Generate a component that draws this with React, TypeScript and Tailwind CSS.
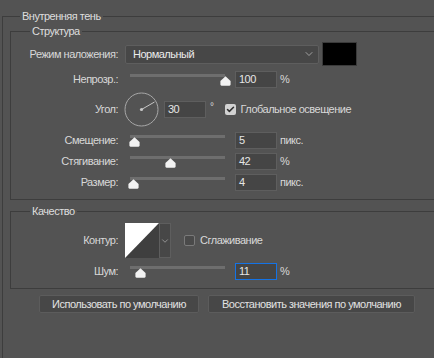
import type { FC, ReactNode } from 'react';
import { ChevronDown, Check } from 'lucide-react';

// ── Small pieces ────────────────────────────────────────────────────────────
const Thumb: FC = () => (
    <svg width="11" height="10" viewBox="0 0 11 10">
        <path d="M5.5 0.3 L10.6 5 V8.6 Q10.6 9.7 9.5 9.7 H1.5 Q0.4 9.7 0.4 8.6 V5 Z" fill="#f2f2f2" />
    </svg>
);

// pos = thumb centre in px from the track start
const Slider: FC<{ pos: number }> = ({ pos }) => (
    <div className="relative w-[95px] h-[17px] ml-[5px] shrink-0">
        <div className="absolute left-0 right-0 top-[3px] h-[3px] bg-[#6e6e6e]" />
        <div className="absolute top-[5px]" style={{ left: `${pos - 5.5}px` }}>
            <Thumb />
        </div>
    </div>
);

const Field: FC<{ value: string; focus?: boolean; className?: string }> = ({ value, focus, className }) => (
    <div
        className={
            'h-[17px] w-[42px] shrink-0 flex items-center pl-[3px] bg-[#454545] border text-[#e6e6e6] ' +
            (focus ? 'border-[#1473e6] ' : 'border-[#5e5e5e] ') +
            (className ?? '')
        }
    >
        {value}
    </div>
);

const Label: FC<{ children: ReactNode }> = ({ children }) => (
    <div className="w-[107px] shrink-0 text-right">{children}</div>
);

const Legend: FC<{ children: ReactNode; ml: string }> = ({ children, ml }) => (
    <div className={'-mt-[9px] w-fit px-[2px] bg-[#535353] leading-[16px] text-[#dedede] ' + ml}>{children}</div>
);

const SliderRow: FC<{ label: string; pos: number; value: string; unit: string; className?: string; focus?: boolean }> = ({
    label, pos, value, unit, className, focus,
}) => (
    <div className={'flex items-center h-[17px] ' + (className ?? '')}>
        <Label>{label}</Label>
        <div className="ml-[7px]" />
        <Slider pos={pos} />
        <Field value={value} focus={focus} className="ml-[10px]" />
        <span className="ml-[3px]">{unit}</span>
    </div>
);

export default function App() {
    return (
        <div className="w-[434px] h-[358px] overflow-hidden bg-[#535353] text-[#d8d8d8] text-[11px] tracking-[-0.5px] font-['Liberation_Sans',Tahoma,sans-serif] leading-none">
            {/* ── Outer group ── */}
            <div className="ml-[2px] mt-[16px] h-[400px] border-t border-l border-[#3d3d3d]">
                <Legend ml="ml-[17px]">Внутренняя тень</Legend>

                {/* ── Структура ── */}
                <div className="ml-[7px] mt-[7px] border-t border-l border-b border-[#3d3d3d] pb-[8px]">
                    <Legend ml="ml-[19px]">Структура</Legend>

                    <div className="flex items-center h-[24px] mt-[3px]">
                        <Label>Режим наложения:</Label>
                        <div className="ml-[7px] w-[194px] h-[19px] flex items-center justify-between pl-[7px] pr-[3px] bg-[#474747] border border-[#5e5e5e] rounded-[2px] text-[#ececec]">
                            <span>Нормальный</span>
                            <ChevronDown className="w-[12px] h-[12px] text-[#bdbdbd]" strokeWidth={1.5} />
                        </div>
                        <div className="ml-[3px] w-[35px] h-[24px] bg-black border border-[#3a3a3a]" />
                    </div>

                    <SliderRow label="Непрозр.:" pos={95} value="100" unit="%" className="mt-[5px]" />

                    <div className="flex items-center h-[34px] mt-[4px]">
                        <Label>Угол:</Label>
                        <svg className="ml-[6px] shrink-0" width="35" height="35" viewBox="0 0 35 35">
                            <circle cx="17.5" cy="17.5" r="16.5" fill="none" stroke="#a8a8a8" strokeWidth="1" />
                            <line x1="17.5" y1="17.5" x2="30.5" y2="10" stroke="#c8c8c8" strokeWidth="1" />
                            <circle cx="17.5" cy="17.5" r="1.6" fill="#c8c8c8" />
                        </svg>
                        <Field value="30" className="ml-[5px]" />
                        <span className="ml-[4px] -mt-[4px] text-[10px]">°</span>
                        <div className="ml-[11px] w-[11px] h-[11px] rounded-[2px] bg-[#d2d2d2] flex items-center justify-center">
                            <Check className="w-[9px] h-[9px] text-[#2f2f2f]" strokeWidth={4} />
                        </div>
                        <span className="ml-[5px]">Глобальное освещение</span>
                    </div>

                    <SliderRow label="Смещение:" pos={4} value="5" unit="пикс." className="mt-[6px]" />
                    <SliderRow label="Стягивание:" pos={40} value="42" unit="%" className="mt-[4px]" />
                    <SliderRow label="Размер:" pos={3} value="4" unit="пикс." className="mt-[4px]" />
                </div>

                {/* ── Качество ── */}
                <div className="ml-[7px] mt-[11px] border-t border-l border-b border-[#3d3d3d] pb-[8px]">
                    <Legend ml="ml-[19px]">Качество</Legend>

                    <div className="flex items-center h-[35px] mt-[4px]">
                        <Label>Контур:</Label>
                        <div className="ml-[7px] flex h-[35px]">
                            <svg width="34" height="35" viewBox="0 0 34 35" className="shrink-0">
                                <rect width="34" height="35" fill="#3f3f3f" />
                                <polygon points="0,0 34,0 0,35" fill="#ffffff" />
                            </svg>
                            <div className="w-[12px] h-[35px] flex items-center justify-center bg-[#474747] border border-[#5e5e5e]">
                                <ChevronDown className="w-[10px] h-[10px] text-[#bdbdbd]" strokeWidth={1.5} />
                            </div>
                        </div>
                        <div className="ml-[13px] w-[11px] h-[11px] rounded-[2px] bg-[#4a4a4a] border border-[#7a7a7a]" />
                        <span className="ml-[5px]">Сглаживание</span>
                    </div>

                    <SliderRow label="Шум:" pos={10.5} value="11" unit="%" focus className="mt-[5px]" />
                </div>

                {/* ── Buttons ── */}
                <div className="flex gap-[9px] ml-[36px] mt-[6px]">
                    <div className="w-[160px] h-[18px] flex items-center justify-center bg-[#474747] border border-[#5c5c5c] rounded-[2px] text-[#e2e2e2]">
                        Использовать по умолчанию
                    </div>
                    <div className="w-[207px] h-[18px] flex items-center justify-center bg-[#474747] border border-[#5c5c5c] rounded-[2px] text-[#e2e2e2]">
                        Восстановить значения по умолчанию
                    </div>
                </div>
            </div>
        </div>
    );
}
